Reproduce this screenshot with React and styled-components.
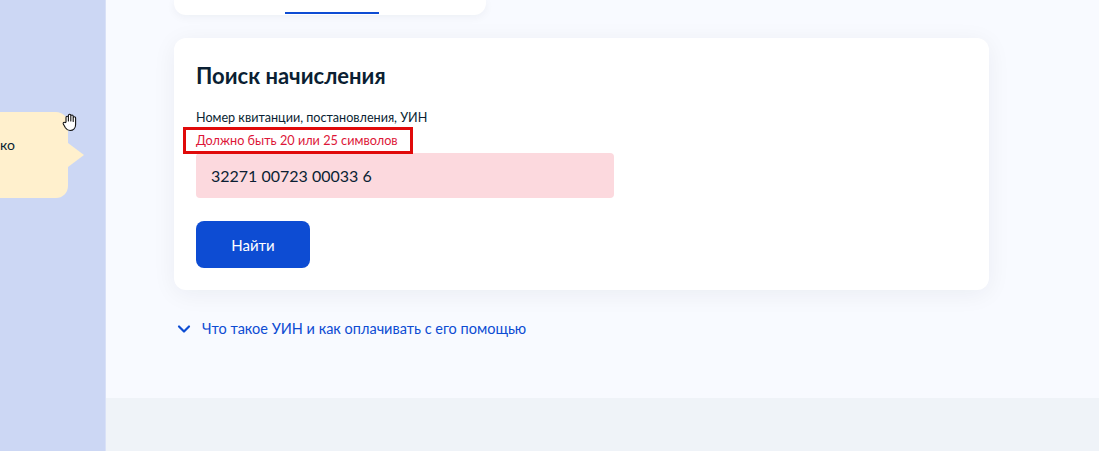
import styled, { createGlobalStyle } from "styled-components";
import { ChevronDown } from "lucide-react";

const GlobalStyle = createGlobalStyle`
    html, body {
        margin: 0;
        padding: 0;
        height: 100%;
    }
    body {
        font-family: Lato, "Noto Sans", sans-serif;
        color: #0b1f33;
        overflow: hidden;
    }
    #root {
        height: 100%;
    }
`;

const Page = styled.div`
    display: flex;
    width: 1099px;
    height: 451px;
`;
const Sidebar = styled.div`
    position: relative;
    width: 105px;
    flex-shrink: 0;
    background: #ccd7f4;
    border-right: 1px solid #d9e1f7;
`;
const Hint = styled.div`
    position: absolute;
    top: 112px;
    left: -40px;
    width: 108px;
    height: 86px;
    box-sizing: border-box;
    padding: 24px 0 0 40px;
    background: #fff0cd;
    border-radius: 12px;
    font-size: 14px;
    line-height: 18px;
    &::after {
        content: "";
        position: absolute;
        left: 108px;
        top: 31px;
        border-style: solid;
        border-width: 12px 0 12px 16px;
        border-color: transparent transparent transparent #fff0cd;
    }
`;
const Cursor = styled.svg`
    position: absolute;
    top: 113px;
    left: 61px;
    width: 18px;
    height: 19px;
`;
const Main = styled.div`
    flex: 1;
    display: flex;
    flex-direction: column;
`;
const Content = styled.div`
    height: 398px;
    box-sizing: border-box;
    padding-left: 68px;
    background: #f8faff;
`;
const Tabs = styled.div`
    position: relative;
    width: 312px;
    height: 15px;
    background: #fff;
    border-radius: 0 0 12px 12px;
    box-shadow: 0 2px 10px rgba(11, 31, 51, 0.05);
`;
const TabLine = styled.div`
    position: absolute;
    left: 111px;
    bottom: 1px;
    width: 94px;
    height: 2px;
    background: #0d4cd3;
`;
const Card = styled.div`
    margin-top: 23px;
    width: 815px;
    box-sizing: border-box;
    padding: 24px 22px 22px;
    background: #fff;
    border-radius: 12px;
    box-shadow: 0 4px 24px rgba(11, 31, 51, 0.06);
`;
const Title = styled.h2`
    margin: 0;
    font-size: 22px;
    line-height: 28px;
    font-weight: 700;
`;
const Label = styled.div`
    margin-top: 20px;
    font-size: 12.6px;
    line-height: 16px;
`;
const Error = styled.div`
    position: relative;
    display: inline-block;
    margin-top: 6px;
    font-size: 12.7px;
    line-height: 16px;
    color: #dd1638;
    &::after {
        content: "";
        position: absolute;
        left: -13px;
        right: -15px;
        top: -5px;
        bottom: -6px;
        border: 3px solid #e00a0a;
    }
`;
const Input = styled.div`
    margin-top: 5px;
    width: 418px;
    height: 45px;
    box-sizing: border-box;
    padding-left: 15px;
    display: flex;
    align-items: center;
    background: #fcd9de;
    border-radius: 4px;
    font-size: 16px;
`;
const Button = styled.button`
    display: block;
    margin-top: 23px;
    width: 114px;
    height: 47px;
    border: none;
    border-radius: 8px;
    background: #0d4cd3;
    color: #fff;
    font-family: inherit;
    font-size: 15px;
`;
const More = styled.div`
    margin-top: 29px;
    display: flex;
    align-items: center;
    gap: 8px;
    color: #0d4cd3;
    font-size: 14.5px;
    line-height: 20px;
`;
const Footer = styled.div`
    flex: 1;
    background: #eff3f8;
`;

export default function App() {
    return (
        <Page>
            <GlobalStyle />
            <Sidebar>
                <Hint>ко</Hint>
                <Cursor viewBox="0 0 18 19">
                    <path
                        d="M5 9V4.5a1.2 1.2 0 0 1 2.4 0V8V2.5a1.2 1.2 0 0 1 2.4 0V8V3.2a1.2 1.2 0 0 1 2.4 0V8.5V5a1.2 1.2 0 0 1 2.4 0v6.5c0 3.5-2.3 6-5.5 6c-2.4 0-3.5-1-4.7-2.8L2.3 11a1.2 1.2 0 0 1 1.9-1.4z"
                        fill="#fff"
                        stroke="#111"
                        strokeWidth="1.1"
                        strokeLinejoin="round"
                    />
                </Cursor>
            </Sidebar>
            <Main>
                <Content>
                    <Tabs>
                        <TabLine />
                    </Tabs>
                    <Card>
                        <Title>Поиск начисления</Title>
                        <Label>Номер квитанции, постановления, УИН</Label>
                        <Error>Должно быть 20 или 25 символов</Error>
                        <Input>32271 00723 00033 6</Input>
                        <Button>Найти</Button>
                    </Card>
                    <More>
                        <ChevronDown size={20} strokeWidth={2.6} />
                        Что такое УИН и как оплачивать с его помощью
                    </More>
                </Content>
                <Footer />
            </Main>
        </Page>
    );
}
